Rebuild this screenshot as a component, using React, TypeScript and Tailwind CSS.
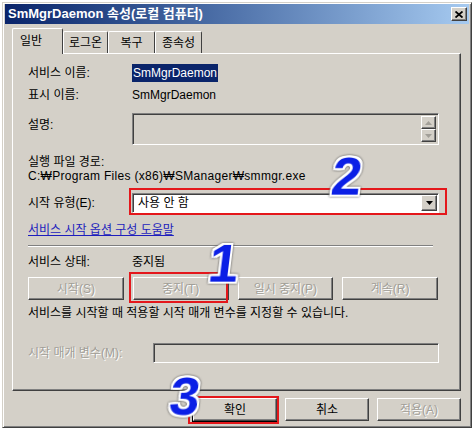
import type { ReactNode } from "react";

const raised =
  "border border-t-white border-l-white border-r-[#404040] border-b-[#404040] shadow-[inset_-1px_-1px_0_#808080]";
const sunken =
  "border border-t-[#808080] border-l-[#808080] border-r-white border-b-white shadow-[inset_1px_1px_0_#404040]";
const disabledText = "text-[#a29f98] [text-shadow:1px_1px_0_#fff]";
const marker =
  "absolute -skew-x-[7deg] font-['Liberation_Sans',sans-serif] text-[54px] leading-none font-bold text-[#0b1fe6] [-webkit-text-stroke:2px_#0b1fe6] [paint-order:stroke_fill] [text-shadow:2px_0_0_#fff,-2px_0_0_#fff,0_2px_0_#fff,0_-2px_0_#fff,2px_2px_0_#fff,-2px_-2px_0_#fff,2px_-2px_0_#fff,-2px_2px_0_#fff] drop-shadow-[0_0_1px_#444]";

function Btn({
  children,
  disabled,
  className,
}: {
  children: ReactNode;
  disabled?: boolean;
  className?: string;
}) {
  return (
    <div
      className={`flex h-[23px] items-center justify-center bg-[#d4d0c8] ${raised} ${
        disabled ? disabledText : "text-black"
      } ${className ?? ""}`}
    >
      {children}
    </div>
  );
}

function Arrow({ up, color }: { up?: boolean; color: string }) {
  return (
    <svg width="7" height="4" viewBox="0 0 7 4">
      <polygon points={up ? "0,4 3.5,0 7,4" : "0,0 7,0 3.5,4"} fill={color} />
    </svg>
  );
}

function Row({ label, children, className }: { label: string; children: ReactNode; className?: string }) {
  return (
    <div className={`flex items-center ${className ?? ""}`}>
      <div className="w-[104px] shrink-0">{label}</div>
      {children}
    </div>
  );
}

export default function App() {
  return (
    <div className="h-[433px] w-[474px] bg-white font-['Liberation_Sans','Noto_Sans_CJK_KR',sans-serif] text-[12px] text-black">
      <div className="relative ml-[2px] mt-[2px] flex h-[426px] w-[470px] flex-col border border-t-[#d4d0c8] border-l-[#d4d0c8] border-r-[#404040] border-b-[#404040] bg-[#d4d0c8] px-[2px] pt-[1px] shadow-[inset_1px_1px_0_#fff,inset_-1px_-1px_0_#808080]">
        {/* title bar */}
        <div className="flex h-[20px] items-center justify-between bg-gradient-to-r from-[#0a246a] to-[#a6caf0] pl-[3px] pr-[2px]">
          <span className="text-[13px] font-bold text-white">SmMgrDaemon 속성(로컬 컴퓨터)</span>
          <div className={`flex h-[14px] w-[16px] items-center justify-center bg-[#d4d0c8] ${raised}`}>
            <svg width="8" height="7" viewBox="0 0 8 7">
              <path d="M0.5 0.5 L7.5 6.5 M7.5 0.5 L0.5 6.5" stroke="black" strokeWidth="1.8" />
            </svg>
          </div>
        </div>

        {/* tabs */}
        <div className="ml-[7px] mt-[4px] flex h-[25px] items-end">
          <div className="relative z-10 -mb-px flex h-[26px] w-[51px] items-center rounded-t-[2px] border-l border-t border-r border-l-white border-t-white border-r-[#404040] bg-[#d4d0c8] pb-[2px] pl-[7px]">
            일반
          </div>
          <div className="flex h-[22px] w-[45px] items-center justify-center rounded-t-[2px] border-l border-t border-r border-l-white border-t-white border-r-[#404040]">
            로그온
          </div>
          <div className="flex h-[22px] w-[47px] items-center justify-center rounded-t-[2px] border-l border-t border-r border-l-white border-t-white border-r-[#404040]">
            복구
          </div>
          <div className="flex h-[22px] w-[47px] items-center justify-center rounded-t-[2px] border-l border-t border-r border-l-white border-t-white border-r-[#404040]">
            종속성
          </div>
        </div>

        {/* panel */}
        <div className={`ml-[7px] flex h-[338px] w-[449px] flex-col pl-[15px] ${raised}`}>
          <Row label="서비스 이름:" className="mt-[11px] h-[16px]">
            <span className="bg-[#0a246a] px-px text-white">SmMgrDaemon</span>
          </Row>
          <Row label="표시 이름:" className="mt-[6px] h-[16px]">
            <span>SmMgrDaemon</span>
          </Row>
          <div className="mt-[10px] flex h-[32px] items-start">
            <div className="w-[104px] pt-[3px]">설명:</div>
            <div className={`flex h-[32px] w-[307px] justify-end p-[2px] ${sunken}`}>
              <div className="flex flex-col">
                <div className={`flex h-[14px] w-[15px] items-center justify-center ${raised}`}>
                  <Arrow up color="#a29f98" />
                </div>
                <div className={`flex h-[14px] w-[15px] items-center justify-center ${raised}`}>
                  <Arrow color="#a29f98" />
                </div>
              </div>
            </div>
          </div>
          <div className="mt-[10px] h-[14px] leading-[14px]">실행 파일 경로:</div>
          <div className="h-[14px] leading-[14px] tracking-[0.3px]">C:₩Program Files (x86)₩SManager₩smmgr.exe</div>

          <Row label="시작 유형(E):" className="mt-[10px] h-[20px]">
            <div className="relative">
              <div className={`flex h-[20px] w-[307px] items-center justify-between bg-white pl-[5px] pr-[1px] ${sunken}`}>
                <span>사용 안 함</span>
                <div className={`flex h-[16px] w-[16px] items-center justify-center bg-[#d4d0c8] ${raised}`}>
                  <Arrow color="#000" />
                </div>
              </div>
              <div className="absolute -bottom-[2px] -left-[3px] -right-[8px] -top-[5px] border-2 border-[#e4171b]" />
            </div>
          </Row>

          <div className="mt-[9px] flex h-[16px] items-center">
            <span className="text-[#1d1dbd] underline">서비스 시작 옵션 구성 도움말</span>
          </div>

          <div className="mt-[7px] h-[2px] w-[405px] border-t border-b border-t-[#808080] border-b-white" />

          <Row label="서비스 상태:" className="mt-[7px] h-[16px]">
            <span>중지됨</span>
          </Row>

          <div className="mt-[7px] grid w-[410px] grid-cols-4 gap-x-[9px]">
            <Btn disabled>시작(S)</Btn>
            <div className="relative">
              <Btn disabled>중지(T)</Btn>
              <div className="absolute -bottom-[3px] -left-[4px] -top-[5px] right-[1px] border-2 border-[#e4171b]" />
            </div>
            <Btn disabled>일시 중지(P)</Btn>
            <Btn disabled>계속(R)</Btn>
          </div>

          <div className="mt-[6px] h-[14px] leading-[14px]">
            서비스를 시작할 때 적용할 시작 매개 변수를 지정할 수 있습니다.
          </div>

          <div className="mt-[23px] flex h-[20px] items-center">
            <div className={`w-[125px] ${disabledText}`}>시작 매개 변수(M):</div>
            <div className={`h-[20px] w-[286px] ${sunken}`} />
          </div>
        </div>

        {/* dialog buttons */}
        <div className="mr-[8px] mt-[7px] flex justify-end gap-x-[8px]">
          <div className="relative">
            <Btn className="w-[84px] outline outline-1 outline-black">확인</Btn>
            <div className="absolute -bottom-[3px] -left-[5px] -right-[2px] -top-[2px] border-2 border-[#e4171b]" />
          </div>
          <Btn className="w-[84px]">취소</Btn>
          <Btn disabled className="w-[84px]">
            적용(A)
          </Btn>
        </div>

        {/* annotation numbers */}
        <span className={`${marker} left-[206px] top-[233px]`}>1</span>
        <span className={`${marker} left-[329px] top-[146px]`}>2</span>
        <span className={`${marker} left-[167px] top-[366px]`}>3</span>
      </div>
    </div>
  );
}
